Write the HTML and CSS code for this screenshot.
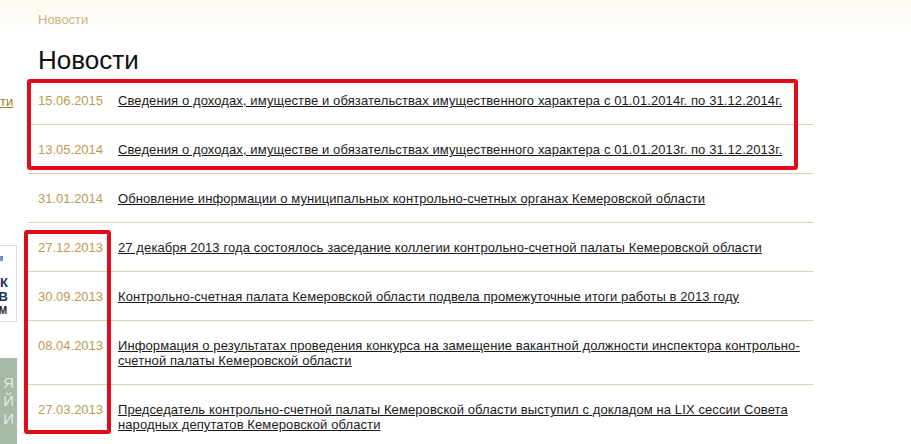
FILE: index.html
```html
<!DOCTYPE html>
<html lang="ru">
<head>
<meta charset="utf-8">
<title>Новости</title>
<link rel="stylesheet" href="styles.css">
</head>
<body>
<div class="page">
  <aside class="sidebar">
    <a class="side-link" href="#">ти</a>
    <div class="logo-box">
      <span class="logo-sq"></span>
      <span class="logo-k">К</span>
      <span class="logo-v">В</span>
      <span class="logo-m">М</span>
    </div>
    <div class="green-box">
      <span>Я</span>
      <span>Й</span>
      <span>И</span>
    </div>
  </aside>
  <main class="main">
    <div class="crumbs">Новости</div>
    <h1 class="title">Новости</h1>
    <ul class="news">
      <li class="item"><span class="date">15.06.2015</span><a class="link" href="#">Сведения о доходах, имуществе и обязательствах имущественного характера с 01.01.2014г. по 31.12.2014г.</a></li>
      <li class="item"><span class="date">13.05.2014</span><a class="link" href="#">Сведения о доходах, имуществе и обязательствах имущественного характера с 01.01.2013г. по 31.12.2013г.</a></li>
      <li class="item"><span class="date">31.01.2014</span><a class="link" href="#">Обновление информации о муниципальных контрольно-счетных органах Кемеровской области</a></li>
      <li class="item"><span class="date">27.12.2013</span><a class="link" href="#">27 декабря 2013 года состоялось заседание коллегии контрольно-счетной палаты Кемеровской области</a></li>
      <li class="item"><span class="date">30.09.2013</span><a class="link" href="#">Контрольно-счетная палата Кемеровской области подвела промежуточные итоги работы в 2013 году</a></li>
      <li class="item"><span class="date">08.04.2013</span><a class="link" href="#">Информация о результатах проведения конкурса на замещение вакантной должности инспектора контрольно-счетной палаты Кемеровской области</a></li>
      <li class="item"><span class="date">27.03.2013</span><a class="link" href="#">Председатель контрольно-счетной палаты Кемеровской области выступил с докладом на LIX сессии Совета народных депутатов Кемеровской области</a></li>
    </ul>
  </main>
</div>
<div class="mark mark-top"></div>
<div class="mark mark-left"></div>
</body>
</html>
```

FILE: styles.css
```css
html, body {
  margin: 0;
  padding: 0;
}
body {
  font-family: Arial, "Liberation Sans", sans-serif;
  background: linear-gradient(to bottom, #fcf9f0 0, #ffffff 34px) no-repeat;
  background-color: #fff;
  width: 911px;
  height: 444px;
  overflow: hidden;
  position: relative;
}
.page {
  display: flex;
  gap: 11px;
}
.sidebar {
  width: 17px;
  overflow: hidden;
  display: flex;
  flex-direction: column;
  align-items: flex-end;
  padding-top: 94px;
}
.side-link {
  font-size: 13px;
  line-height: 16px;
  color: #a1802f;
  text-decoration: underline;
  width: 17px;
  text-align: right;
  padding-right: 6px;
  box-sizing: border-box;
  white-space: nowrap;
}
.logo-box {
  margin-top: 135px;
  width: 17px;
  height: 77px;
  box-sizing: border-box;
  border: 1px solid #dcdcdc;
  border-left: none;
  background: #fff;
  display: flex;
  flex-direction: column;
  align-items: flex-end;
  padding: 10px 10px 0 0;
  overflow: hidden;
}
.logo-sq {
  flex: 0 0 5px;
  width: 5px;
  height: 5px;
  background: #7391c4;
  margin: 0 3px 15px 0;
}
.logo-k, .logo-v {
  font-size: 13px;
  line-height: 14px;
  font-weight: bold;
  color: #1d2f5e;
  margin-right: -2px;
}
.logo-m {
  font-size: 10px;
  line-height: 13px;
  font-weight: bold;
  color: #222;
  margin-right: -1px;
}
.green-box {
  margin-top: 36px;
  width: 17px;
  height: 90px;
  background: #a4baa5;
  display: flex;
  flex-direction: column;
  align-items: flex-end;
  padding: 16px 3px 0 0;
  box-sizing: border-box;
  color: #e2ebe2;
  font-size: 15px;
  line-height: 18px;
  overflow: hidden;
}
.main {
  width: 785px;
}
.crumbs {
  padding: 12px 0 0 10px;
  font-size: 13px;
  line-height: 16px;
  color: #cbb47f;
}
.title {
  margin: 17px 0 0 10px;
  font-size: 26px;
  line-height: 30px;
  font-weight: normal;
  color: #111;
}
.news {
  list-style: none;
  margin: 1px 0 0 0;
  padding: 0;
}
.item {
  display: flex;
  padding: 17px 0 16px 10px;
  border-bottom: 1px solid #d9d1ae;
  font-size: 13px;
  line-height: 15px;
}
.date {
  flex: 0 0 80px;
  color: #bd9a52;
}
.link {
  color: #1a1a1a;
  text-decoration: underline;
  flex: 1;
  padding-right: 8px;
  letter-spacing: 0.1px;
}
.mark {
  position: absolute;
  border: 4px solid #e30b17;
  border-radius: 3px;
  box-sizing: border-box;
  pointer-events: none;
}
.mark-top {
  left: 27px;
  top: 79px;
  width: 771px;
  height: 91px;
}
.mark-left {
  left: 24px;
  top: 230px;
  width: 87px;
  height: 204px;
}
```
